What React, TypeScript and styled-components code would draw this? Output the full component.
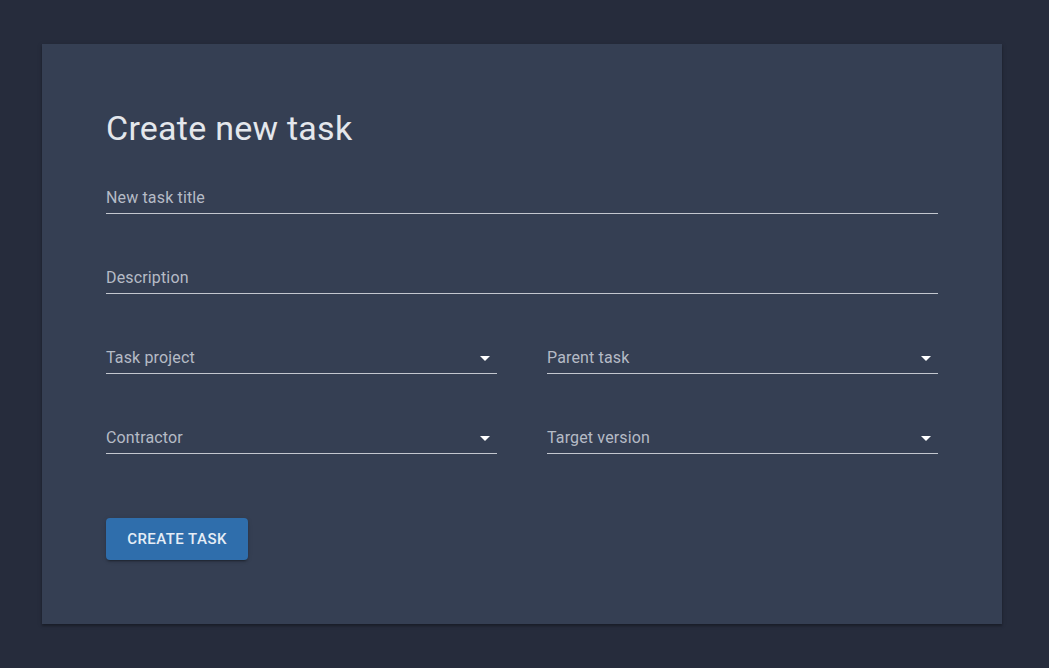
import styled, { createGlobalStyle } from 'styled-components';

const GlobalStyle = createGlobalStyle`
	html, body {
		margin: 0;
		padding: 0;
		background-color: #262c3c;
		font-family: Roboto, "Liberation Sans", sans-serif;
	}
`;

const Page = styled.div`
	min-height: 668px;
	padding: 44px 47px 45px 42px;
	box-sizing: border-box;
`;

const Card = styled.form`
	width: 960px;
	box-sizing: border-box;
	background-color: #353f53;
	padding: 63px 64px 63px;
	box-shadow: 0 2px 2px rgba(0, 0, 0, 0.25), 0 1px 5px rgba(0, 0, 0, 0.15);
	display: flex;
	flex-direction: column;
`;

const Title = styled.h1`
	margin: 0 0 17px;
	font-size: 34px;
	font-weight: 400;
	line-height: 42px;
	letter-spacing: 0.25px;
	color: #e4e7ec;
`;

const Fields = styled.div`
	display: grid;
	grid-template-columns: 1fr 1fr;
	column-gap: 50px;
	row-gap: 32px;
`;

const Field = styled.label<{ $wide?: boolean }>`
	grid-column: ${({ $wide }) => ($wide ? '1 / -1' : 'auto')};
	position: relative;
	display: flex;
	align-items: center;
	height: 32px;
	margin-top: 16px;
	padding: 4px 0 5px;
	box-sizing: border-box;
	border-bottom: 1px solid #c3c7cf;
	cursor: text;
`;

const Placeholder = styled.span`
	flex: 1;
	font-size: 16px;
	line-height: 23px;
	letter-spacing: 0.15px;
	color: #b5bbc6;
`;

const Arrow = styled.svg`
	position: absolute;
	right: 0;
	top: 4px;
	width: 24px;
	height: 24px;
	fill: #ffffff;
`;

const Actions = styled.div`
	margin-top: 64px;
	margin-bottom: 1px;
`;

const Button = styled.button`
	width: 142px;
	height: 42px;
	border: none;
	border-radius: 4px;
	background-color: #2f6eac;
	color: #e5edf6;
	font-family: Roboto, "Liberation Sans", sans-serif;
	font-size: 15px;
	font-weight: 500;
	letter-spacing: 0.46px;
	text-transform: uppercase;
	box-shadow: 0 3px 1px -2px rgba(0, 0, 0, 0.2), 0 2px 2px rgba(0, 0, 0, 0.14),
		0 1px 5px rgba(0, 0, 0, 0.12);
	cursor: pointer;
`;

function DropArrow() {
	return (
		<Arrow viewBox='0 0 24 24'>
			<path d='M7 10l5 5 5-5z' />
		</Arrow>
	);
}

export default function App() {
	return (
		<>
			<GlobalStyle />
			<Page>
				<Card onSubmit={(e) => e.preventDefault()}>
					<Title>Create new task</Title>
					<Fields>
						<Field $wide>
							<Placeholder>New task title</Placeholder>
						</Field>
						<Field $wide>
							<Placeholder>Description</Placeholder>
						</Field>
						<Field>
							<Placeholder>Task project</Placeholder>
							<DropArrow />
						</Field>
						<Field>
							<Placeholder>Parent task</Placeholder>
							<DropArrow />
						</Field>
						<Field>
							<Placeholder>Contractor</Placeholder>
							<DropArrow />
						</Field>
						<Field>
							<Placeholder>Target version</Placeholder>
							<DropArrow />
						</Field>
					</Fields>
					<Actions>
						<Button type='submit'>Create task</Button>
					</Actions>
				</Card>
			</Page>
		</>
	);
}
